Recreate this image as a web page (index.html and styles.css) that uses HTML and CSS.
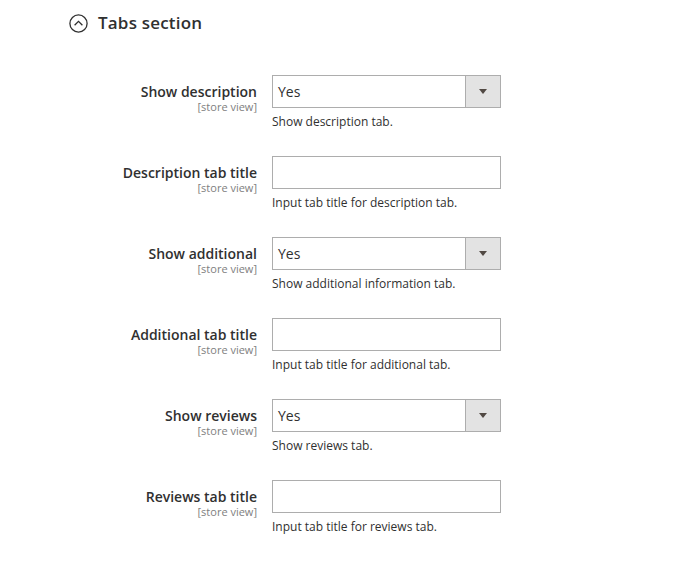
FILE: index.html
```html
<!DOCTYPE html>
<html>
<head>
<meta charset="utf-8">
<link rel="stylesheet" href="styles.css">
</head>
<body>
<div class="page">
  <div class="section-head">
    <span class="toggle">
      <svg width="19" height="19" viewBox="0 0 19 19"><circle cx="9.5" cy="9.5" r="8.6" fill="none" stroke="#303030" stroke-width="1.3"/><path d="M5.6 11.3 L9.5 7.4 L13.4 11.3" fill="none" stroke="#303030" stroke-width="1.3"/></svg>
    </span>
    <span class="title">Tabs section</span>
  </div>
  <div class="rows">
    <div class="row">
      <div class="label"><span class="name">Show description</span><span class="scope">[store view]</span></div>
      <div class="control">
        <div class="select"><span class="value">Yes</span><span class="btn"><span class="arrow"></span></span></div>
        <div class="note">Show description tab.</div>
      </div>
    </div>
    <div class="row">
      <div class="label"><span class="name">Description tab title</span><span class="scope">[store view]</span></div>
      <div class="control">
        <div class="input"></div>
        <div class="note">Input tab title for description tab.</div>
      </div>
    </div>
    <div class="row">
      <div class="label"><span class="name">Show additional</span><span class="scope">[store view]</span></div>
      <div class="control">
        <div class="select"><span class="value">Yes</span><span class="btn"><span class="arrow"></span></span></div>
        <div class="note">Show additional information tab.</div>
      </div>
    </div>
    <div class="row">
      <div class="label"><span class="name">Additional tab title</span><span class="scope">[store view]</span></div>
      <div class="control">
        <div class="input"></div>
        <div class="note">Input tab title for additional tab.</div>
      </div>
    </div>
    <div class="row">
      <div class="label"><span class="name">Show reviews</span><span class="scope">[store view]</span></div>
      <div class="control">
        <div class="select"><span class="value">Yes</span><span class="btn"><span class="arrow"></span></span></div>
        <div class="note">Show reviews tab.</div>
      </div>
    </div>
    <div class="row">
      <div class="label"><span class="name">Reviews tab title</span><span class="scope">[store view]</span></div>
      <div class="control">
        <div class="input"></div>
        <div class="note">Input tab title for reviews tab.</div>
      </div>
    </div>
  </div>
</div>
</body>
</html>
```
FILE: styles.css
```css
html, body { margin: 0; padding: 0; background: #fff; }
body { font-family: "Open Sans", "Liberation Sans", sans-serif; color: #303030; }
.page { width: 685px; height: 564px; overflow: hidden; }
.section-head { display: flex; align-items: center; padding: 13px 0 0 69px; height: 20px; }
.toggle { display: flex; width: 19px; height: 19px; }
.title { margin-left: 10px; font-size: 17px; font-weight: 600; color: #303030; line-height: 20px; letter-spacing: 0.2px; }
.rows { padding-top: 42px; }
.row { display: grid; grid-template-columns: 257px 229px; column-gap: 15px; height: 81px; }
.label { display: flex; flex-direction: column; align-items: flex-end; padding-top: 8px; }
.name { font-size: 14px; font-weight: 600; line-height: 17px; color: #303030; }
.scope { font-size: 11px; line-height: 13px; color: #808080; }
.control { display: flex; flex-direction: column; }
.select, .input { height: 33px; box-sizing: border-box; border: 1px solid #adadad; background: #fff; }
.select { display: flex; justify-content: space-between; }
.value { font-size: 14px; line-height: 31px; padding-left: 5px; color: #303030; }
.btn { width: 34px; border-left: 1px solid #adadad; background: #e3e3e3; display: flex; align-items: center; justify-content: center; }
.arrow { width: 0; height: 0; border-left: 4px solid transparent; border-right: 4px solid transparent; border-top: 5px solid #514943; }
.note { font-size: 12px; line-height: 18px; margin-top: 5px; color: #303030; }
```
